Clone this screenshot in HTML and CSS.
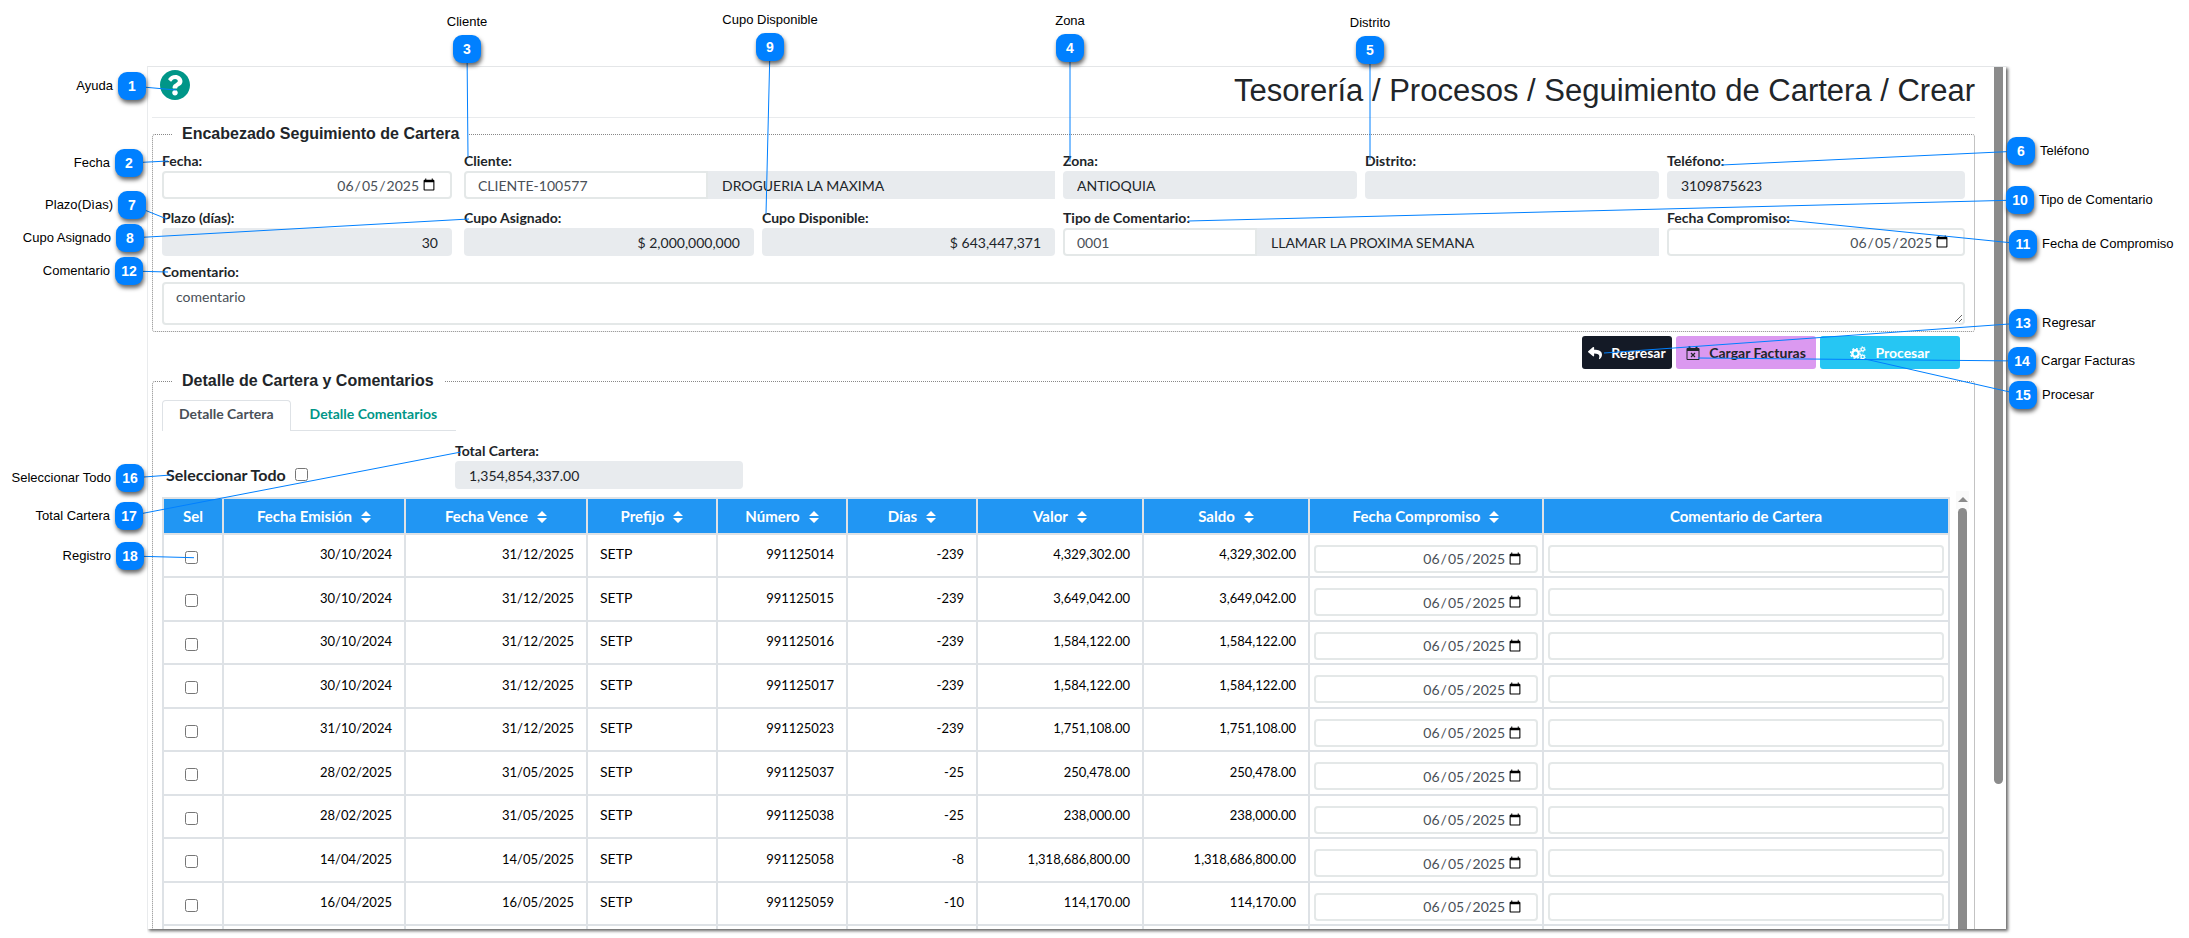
FILE: index.html
```
<!DOCTYPE html>
<html lang="es">
<head>
    <meta charset="UTF-8">
    <meta name="viewport" content="width=device-width, initial-scale=1.0">
    <title>Seguimiento de Cartera</title>
    <link rel="stylesheet" href="styles.css">
</head>
<body>
    <main class="panel">
        <header class="top">
            <button type="button" class="help" id="help" aria-label="Ayuda">
                <svg viewBox="8 8 496 496"><path d="M504 256c0 136.997-111.043 248-248 248S8 392.997 8 256C8 119.083 119.043 8 256 8s248 111.083 248 248zM262.655 90c-54.497 0-89.255 22.957-116.549 63.758-3.536 5.286-2.353 12.415 2.715 16.258l34.699 26.31c5.205 3.947 12.621 3.008 16.665-2.122 17.864-22.658 30.113-35.797 57.303-35.797 20.429 0 45.698 13.148 45.698 32.958 0 14.976-12.363 22.667-32.534 33.976C247.128 238.528 216 254.941 216 296v4c0 6.627 5.373 12 12 12h56c6.627 0 12-5.373 12-12v-1.333c0-28.462 83.186-29.647 83.186-106.667 0-58.002-60.165-102-116.531-102zM256 338c-25.365 0-46 20.635-46 46 0 25.364 20.635 46 46 46s46-20.636 46-46c0-25.365-20.635-46-46-46z"/></svg>
            </button>
            <h1>Tesorería / Procesos / Seguimiento de Cartera / Crear</h1>
        </header>

        <fieldset class="head">
            <legend>Encabezado Seguimiento de Cartera</legend>
            <div class="grid">
                <div class="field first">
                    <label for="fecha" id="l-fecha">Fecha:</label>
                    <input type="date" id="fecha" value="2025-06-05">
                </div>
                <div class="field wide">
                    <label for="cliente" id="l-cliente">Cliente:</label>
                    <div class="group">
                        <input type="text" class="code" id="cliente" value="CLIENTE-100577">
                        <input type="text" class="addon" value="DROGUERIA LA MAXIMA" aria-label="Nombre del cliente" readonly>
                    </div>
                </div>
                <div class="field">
                    <label for="zona" id="l-zona">Zona:</label>
                    <input type="text" id="zona" value="ANTIOQUIA" readonly>
                </div>
                <div class="field">
                    <label for="distrito" id="l-distrito">Distrito:</label>
                    <input type="text" id="distrito" readonly>
                </div>
                <div class="field">
                    <label for="telefono" id="l-telefono">Teléfono:</label>
                    <input type="text" id="telefono" value="3109875623" readonly>
                </div>
                <div class="field first">
                    <label for="plazo" id="l-plazo">Plazo (días):</label>
                    <input type="text" class="num" id="plazo" value="30" readonly>
                </div>
                <div class="field">
                    <label for="asignado" id="l-asignado">Cupo Asignado:</label>
                    <input type="text" class="num" id="asignado" value="$ 2,000,000,000" readonly>
                </div>
                <div class="field">
                    <label for="disponible" id="l-disponible">Cupo Disponible:</label>
                    <input type="text" class="num" id="disponible" value="$ 643,447,371" readonly>
                </div>
                <div class="field wide">
                    <label for="tipo" id="l-tipo">Tipo de Comentario:</label>
                    <div class="group">
                        <input type="text" class="code short" id="tipo" value="0001">
                        <input type="text" class="addon" value="LLAMAR LA PROXIMA SEMANA" aria-label="Descripción del comentario" readonly>
                    </div>
                </div>
                <div class="field">
                    <label for="compromiso" id="l-compromiso">Fecha Compromiso:</label>
                    <input type="date" id="compromiso" value="2025-06-05">
                </div>
                <div class="field full">
                    <label for="comentario" id="l-comentario">Comentario:</label>
                    <textarea id="comentario">comentario</textarea>
                </div>
            </div>
        </fieldset>

        <div class="actions">
            <button type="button" class="btn dark" id="b-regresar">
                <svg viewBox="0 0 512 512"><path d="M8.309 189.836L184.313 37.851C199.719 24.546 224 35.347 224 56.015v80.053c160.629 1.839 288 34.032 288 186.258 0 61.441-39.581 122.309-83.333 154.132-13.653 9.931-33.111-2.533-28.077-18.631 45.344-145.012-21.507-183.51-176.59-185.742V360c0 20.7-24.3 31.453-39.687 18.164l-176.004-152c-11.071-9.562-11.086-26.753 0-36.328z"/></svg>
                Regresar
            </button>
            <button type="button" class="btn pink" id="b-cargar">
                <svg viewBox="0 0 13 14"><path fill-rule="evenodd" d="M1 2h1V.5a.5.5 0 0 1 .5-.5h1a.5.5 0 0 1 .5.5V2h5V.5a.5.5 0 0 1 .5-.5h1a.5.5 0 0 1 .5.5V2h1a1 1 0 0 1 1 1v10a1 1 0 0 1-1 1H1a1 1 0 0 1-1-1V3a1 1 0 0 1 1-1zm0 3v8h11V5z"/><path d="M4.500 7l4 4M8.500 7l-4 4" stroke="currentColor" stroke-width="1.200"/></svg>
                Cargar Facturas
            </button>
            <button type="button" class="btn cyan" id="b-procesar">
                <svg viewBox="0 0 16 14" fill="none" stroke="currentColor"><circle cx="5.500" cy="7.500" r="3.200" stroke-width="2.400"/><circle cx="5.500" cy="7.500" r="4.900" stroke-width="1.400" stroke-dasharray="1.920"/><circle cx="12.700" cy="3.300" r="1.700" stroke-width="1.300"/><circle cx="12.700" cy="3.300" r="2.700" stroke-width=".8" stroke-dasharray="1.400"/><circle cx="12.700" cy="10.900" r="1.700" stroke-width="1.300"/><circle cx="12.700" cy="10.900" r="2.700" stroke-width=".8" stroke-dasharray="1.400"/></svg>
                Procesar
            </button>
        </div>

        <fieldset class="detail">
            <legend>Detalle de Cartera y Comentarios</legend>
            <nav class="tabs">
                <a href="#cartera" class="active">Detalle Cartera</a>
                <a href="#comentarios">Detalle Comentarios</a>
            </nav>
            <div class="summary">
                <div class="all">
                    <label for="todo" id="l-todo">Seleccionar Todo</label>
                    <input type="checkbox" id="todo">
                </div>
                <div class="field total">
                    <label for="total" id="l-total">Total Cartera:</label>
                    <input type="text" id="total" value="1,354,854,337.00" readonly>
                </div>
            </div>
            <div class="scroller" id="cartera">
                <table id="carteraTable">
                    <colgroup>
                        <col class="c-sel"><col class="c-date"><col class="c-date"><col class="c-small"><col class="c-small"><col class="c-small"><col class="c-money"><col class="c-money"><col class="c-comp"><col>
                    </colgroup>
                    <thead><tr></tr></thead>
                    <tbody></tbody>
                </table>
                <div class="scrollbar"></div>
            </div>
        </fieldset>
        <div class="page-bar"></div>
    </main>

    <svg class="lines" id="lines"></svg>
    <div id="callouts"></div>

<script src="script.js"></script>
</body>
</html>
```
FILE: styles.css
```
* { box-sizing: border-box; }
body { margin: 0; height: 100vh; padding: 66px 183px 9px 147px; position: relative; overflow: hidden; background: #fff; color: #212529; font-family: Lato, "Liberation Sans", sans-serif; font-size: 14px; line-height: 20px; }
input, textarea, button { font-family: inherit; font-size: 14px; }

.panel { position: relative; height: 100%; overflow: hidden; padding: 0 31px 0 4px; border-top: 1px solid #e4e6e8; border-left: 1px solid #e9ebed; box-shadow: 2px 2px 3px #666; clip-path: inset(0 -8px -8px 0); }
.page-bar { position: absolute; top: 0; right: 3px; width: 9px; height: 717px; background: #8b8b8b; border-radius: 0 0 5px 5px; }

/* title row */
.top { display: flex; justify-content: space-between; align-items: flex-start; height: 51px; padding: 3px 0 0 8px; border-bottom: 1px solid #e9ebed; }
.top h1 { margin: 0; font-family: "Liberation Sans", Arial, sans-serif; font-size: 31px; font-weight: normal; line-height: 42px; }
.help { width: 30px; height: 30px; padding: 0; border: none; background: none; cursor: pointer; }
.help svg { display: block; width: 30px; height: 30px; fill: #009688; }

/* form */
fieldset { min-width: 0; margin: 0; padding: 0 9px; border: 1px dotted #888; border-radius: 3px; }
legend { margin-left: 10px; padding: 0 10px; font-family: "Liberation Sans", Arial, sans-serif; font-size: 16px; font-weight: bold; line-height: 20px; }
.head { margin-top: 6px; padding-bottom: 6px; }
.grid { display: grid; grid-template-columns: 294fr 290fr 293fr 294fr 294fr 298fr; column-gap: 8px; row-gap: 9px; padding-top: 7px; }
.field label { display: block; width: max-content; font-weight: bold; line-height: 20px; }
.field { min-width: 0; }
.first { padding-right: 4px; }
.wide { grid-column: span 2; }
.full { grid-column: 1 / -1; margin-top: -3px; }
.field input, .row-input { display: block; width: 100%; height: 28px; padding: 2px 12px; border: 2px solid #e4e8e8; border-radius: 4px; background: #fff; color: #495057; }
.field input[readonly] { background: #e8ebee; border-color: #e8ebee; color: #212529; }
.group { display: flex; }
.field .code { width: 244px; border-radius: 4px 0 0 4px; }
.field .short { width: 194px; }
.field .addon { flex: 1; min-width: 0; border-radius: 0; }
.num, input[type="date"] { text-align: right; }
textarea { display: block; width: 100%; height: 43px; padding: 3px 12px; border: 2px solid #e4e8e8; border-radius: 4px; color: #495057; line-height: 20px; resize: vertical; }

/* buttons */
.actions { display: flex; justify-content: flex-end; gap: 4px; margin: 4px 15px 0 0; }
.btn { display: flex; align-items: center; justify-content: center; gap: 9px; width: 140px; height: 33px; padding: 0; border: none; border-radius: 3px; font-weight: bold; cursor: pointer; }
.btn svg { width: 14px; height: 14px; fill: currentColor; }
.btn.dark { width: 90px; background: #141a26; color: #fff; }
.btn.pink { background: #db99f0; color: #212529; }
.btn.cyan { background: #26c6f3; color: #fff; }
.btn.cyan svg { width: 16px; fill: none; }

/* detail */
.detail { margin-top: 2px; padding-right: 5px; }
.tabs { display: flex; width: 294px; margin-top: 9px; border-bottom: 1px solid #dee2e6; }
.tabs a { height: 30px; padding: 3px 18px; border: 1px solid transparent; border-bottom: none; color: #009688; font-weight: bold; line-height: 20px; text-decoration: none; white-space: nowrap; }
.tabs .active { margin-bottom: -1px; height: 31px; padding: 3px 16px; border-color: #dee2e6; border-radius: 4px 4px 0 0; background: #fff; color: #495057; }
.summary { display: flex; margin: 10px 0 8px; }
.all { display: flex; align-items: flex-end; gap: 9px; width: 293px; padding: 0 0 4px 4px; }
.all label { font-size: 16px; font-weight: bold; }
.all input, td input[type="checkbox"] { width: 13px; height: 13px; margin: 0; }
.all input { margin-bottom: 4px; }
.total { width: 288px; }

.scroller { display: flex; gap: 6px; }
table { flex: 1; width: 0; table-layout: fixed; border-collapse: collapse; }
.c-sel { width: 60px; }
.c-date { width: 182px; }
.c-small { width: 130px; }
.c-money { width: 166px; }
.c-comp { width: 234px; }
th { height: 36px; padding: 0; border: 2px solid #dee2e6; background: #2196f3; color: #fff; font-size: 15px; font-weight: bold; }
th svg { width: 10px; height: 12px; margin-left: 9px; fill: #fff; vertical-align: -1px; }
td { height: 43px; padding: 0 12px 3px; border: 2px solid #dee2e6; color: #000; font-size: 13px; text-align: right; line-height: 20px; }
tr:nth-child(even) td { height: 44px; }
td.sel { padding: 0 3px 0 0; text-align: center; }
td.sel input { vertical-align: middle; }
td.text { font-size: 14px; text-align: left; }
td.edit { padding: 8px 4px 2px; }
.scrollbar { position: relative; align-self: stretch; width: 13px; margin-top: -6px; background: linear-gradient(#fafafa, #fafafa) 0 0 / 13px 18px no-repeat; }
.scrollbar::before { content: ""; position: absolute; top: 6px; left: 2px; border: 5px solid transparent; border-top: none; border-bottom-color: #8b8b8b; }
.scrollbar::after { content: ""; position: absolute; top: 17px; bottom: 0; left: 2px; width: 9px; border-radius: 5px; background: #8b8b8b; }

/* numbered callouts over the form */
.lines { position: absolute; top: 0; left: 0; width: 100%; height: 100%; pointer-events: none; }
.lines line { stroke: #0080ff; stroke-width: 1; }
.callout { position: absolute; display: flex; align-items: center; gap: 5px; width: 28px; height: 28px; color: #000; font-family: "Liberation Sans", Arial, sans-serif; font-size: 13px; white-space: nowrap; }
.callout b { flex: none; width: 28px; height: 28px; border-radius: 9px; background: #0080ff; box-shadow: 1px 3px 4px rgba(0,0,0,0.6); color: #fff; font-size: 14px; line-height: 28px; text-align: center; }
.callout.left { flex-direction: row-reverse; }
.callout.top-side { flex-direction: column-reverse; justify-content: flex-start; gap: 3px; }
```
FILE: script.js
```
// Table
const SORT = '<svg viewBox="0 0 10 12"><path d="M5 0l5 5H0zM0 7h10l-5 5z"/></svg>';
const columns = ['Sel', 'Fecha Emisión', 'Fecha Vence', 'Prefijo', 'Número', 'Días', 'Valor', 'Saldo', 'Fecha Compromiso', 'Comentario de Cartera'];
const facturas = [
  ['30/10/2024', '31/12/2025', 'SETP', '991125014', '-239', '4,329,302.00'],
  ['30/10/2024', '31/12/2025', 'SETP', '991125015', '-239', '3,649,042.00'],
  ['30/10/2024', '31/12/2025', 'SETP', '991125016', '-239', '1,584,122.00'],
  ['30/10/2024', '31/12/2025', 'SETP', '991125017', '-239', '1,584,122.00'],
  ['31/10/2024', '31/12/2025', 'SETP', '991125023', '-239', '1,751,108.00'],
  ['28/02/2025', '31/05/2025', 'SETP', '991125037', '-25', '250,478.00'],
  ['28/02/2025', '31/05/2025', 'SETP', '991125038', '-25', '238,000.00'],
  ['14/04/2025', '14/05/2025', 'SETP', '991125058', '-8', '1,318,686,800.00'],
  ['16/04/2025', '16/05/2025', 'SETP', '991125059', '-10', '114,170.00']
];

document.querySelector('#carteraTable thead tr').innerHTML = columns
  .map((c, i) => `<th>${c}${i > 0 && i < 9 ? SORT : ''}</th>`).join('');

let rows = '';
facturas.forEach(([emision, vence, prefijo, numero, dias, valor], i) => {
  rows += `<tr><td class="sel"><input type="checkbox" id="sel${i}" aria-label="Seleccionar ${numero}"></td>
    <td>${emision}</td><td>${vence}</td><td class="text">${prefijo}</td><td>${numero}</td><td>${dias}</td>
    <td>${valor}</td><td>${valor}</td>
    <td class="edit"><input type="date" class="row-input" value="2025-06-05" aria-label="Fecha compromiso ${numero}"></td>
    <td class="edit"><input type="text" class="row-input" aria-label="Comentario ${numero}"></td></tr>`;
});
// blank row at the end
rows += '<tr>' + '<td></td>'.repeat(columns.length) + '</tr>';
document.querySelector('#carteraTable tbody').innerHTML = rows;

// Callouts: number, text, side, badge x (from the right edge on the right side), badge y,
// element pointed at, its edge, and where the line ends from that edge
const callouts = [
  [1, 'Ayuda', 'left', 118, 72, 'help', 'left', 16, 20],
  [2, 'Fecha', 'left', 115, 149, 'l-fecha', 'left', 6, 10],
  [7, 'Plazo(Dìas)', 'left', 118, 191, 'l-plazo', 'left', 5, 11],
  [8, 'Cupo Asignado', 'left', 116, 224, 'l-asignado', 'left', 5, 11],
  [12, 'Comentario', 'left', 115, 257, 'l-comentario', 'left', 6, 10],
  [16, 'Seleccionar Todo', 'left', 116, 464, 'l-todo', 'left', 5, 10],
  [17, 'Total Cartera', 'left', 115, 502, 'l-total', 'left', 6, 11],
  [18, 'Registro', 'left', 116, 542, 'sel0', 'left', 9, 7],
  [3, 'Cliente', 'top-side', 453, 35, 'l-cliente', 'left', 4, 6],
  [9, 'Cupo Disponible', 'top-side', 756, 33, 'l-disponible', 'left', 4, 6],
  [4, 'Zona', 'top-side', 1056, 34, 'l-zona', 'left', 7, 11],
  [5, 'Distrito', 'top-side', 1356, 36, 'l-distrito', 'left', 5, 9],
  [6, 'Teléfono', 'right', 182, 137, 'l-telefono', 'right', -3, 14],
  [10, 'Tipo de Comentario', 'right', 183, 186, 'l-tipo', 'right', -2, 13],
  [11, 'Fecha de Compromiso', 'right', 180, 230, 'l-compromiso', 'right', -4, 12],
  [13, 'Regresar', 'right', 180, 309, 'b-regresar', 'left', 22, 17],
  [14, 'Cargar Facturas', 'right', 181, 347, 'b-cargar', 'left', 22, 22],
  [15, 'Procesar', 'right', 180, 381, 'b-procesar', 'left', 45, 23]
];

function drawCallouts() {
  let lines = '', badges = '';
  callouts.forEach(([n, text, side, x, y, id, edge, dx, dy]) => {
    const left = side === 'right' ? window.innerWidth - x : x;
    const target = document.getElementById(id).getBoundingClientRect();
    lines += `<line x1="${left + 14}" y1="${y + 14}" x2="${target[edge] + dx}" y2="${target.top + dy}"/>`;
    badges += `<div class="callout ${side}" style="left:${left}px;top:${y}px"><b>${n}</b><span>${text}</span></div>`;
  });
  document.getElementById('lines').innerHTML = lines;
  document.getElementById('callouts').innerHTML = badges;
}
drawCallouts();
window.onload = drawCallouts;
window.onresize = drawCallouts;
```
